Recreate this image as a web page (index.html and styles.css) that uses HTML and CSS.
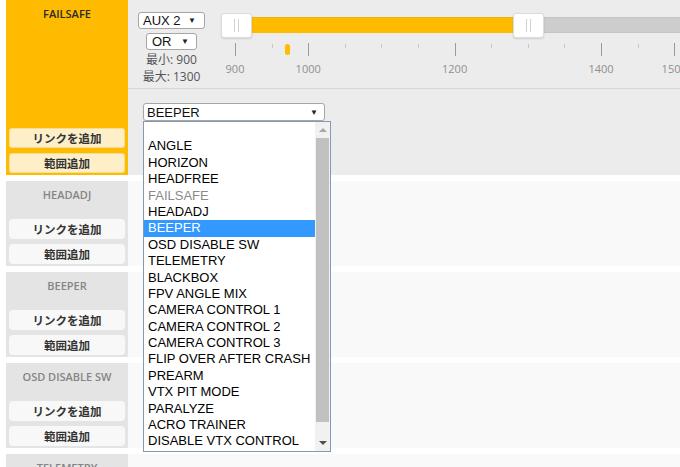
FILE: index.html
```html
<!DOCTYPE html>
<html lang="ja">
<head>
<meta charset="utf-8">
<title>Modes</title>
<link rel="stylesheet" href="styles.css">
</head>
<body>
<div class="modes">
  <div class="mode active first">
    <div class="mode-head">
      <div class="mode-name">FAILSAFE</div>
      <div class="mode-btns">
        <div class="btn">リンクを追加</div>
        <div class="btn">範囲追加</div>
      </div>
    </div>
    <div class="ranges">
      <div class="range range-aux">
        <div class="channel">
          <div class="sel sel-aux"><span>AUX 2</span><span class="arr">▼</span></div>
          <div class="sel sel-or"><span>OR</span><span class="arr">▼</span></div>
          <div class="minmax first-mm">最小: 900</div>
          <div class="minmax">最大: 1300</div>
        </div>
        <div class="slider">
          <div class="track">
            <div class="fill" style="left:0px;width:292.8px"></div>
            <div class="handle" style="left:0px"><i></i><i></i></div>
            <div class="handle" style="left:292.8px"><i></i><i></i></div>
          </div>
          <div class="pips">
            <div class="tick major" style="left:0px"></div>
            <div class="label" style="left:0px">900</div>
            <div class="tick minor" style="left:36.6px"></div>
            <div class="tick major" style="left:73.2px"></div>
            <div class="label" style="left:73.2px">1000</div>
            <div class="tick minor" style="left:109.8px"></div>
            <div class="tick minor" style="left:146.4px"></div>
            <div class="tick minor" style="left:183px"></div>
            <div class="tick major" style="left:219.6px"></div>
            <div class="label" style="left:219.6px">1200</div>
            <div class="tick minor" style="left:256.2px"></div>
            <div class="tick minor" style="left:292.8px"></div>
            <div class="tick minor" style="left:329.4px"></div>
            <div class="tick major" style="left:366px"></div>
            <div class="label" style="left:366px">1400</div>
            <div class="tick minor" style="left:402.6px"></div>
            <div class="tick major" style="left:439.2px"></div>
            <div class="label" style="left:439.2px">1500</div>
            <div class="marker" style="left:50px"></div>
          </div>
        </div>
      </div>
      <div class="range range-link">
        <div class="link-wrap">
          <div class="sel sel-mode"><span>BEEPER</span><span class="arr">▼</span></div>
          <div class="dropdown">
            <div class="options">
              <div class="opt">&nbsp;</div>
              <div class="opt">ANGLE</div>
              <div class="opt">HORIZON</div>
              <div class="opt">HEADFREE</div>
              <div class="opt disabled">FAILSAFE</div>
              <div class="opt">HEADADJ</div>
              <div class="opt selected">BEEPER</div>
              <div class="opt">OSD DISABLE SW</div>
              <div class="opt">TELEMETRY</div>
              <div class="opt">BLACKBOX</div>
              <div class="opt">FPV ANGLE MIX</div>
              <div class="opt">CAMERA CONTROL 1</div>
              <div class="opt">CAMERA CONTROL 2</div>
              <div class="opt">CAMERA CONTROL 3</div>
              <div class="opt">FLIP OVER AFTER CRASH</div>
              <div class="opt">PREARM</div>
              <div class="opt">VTX PIT MODE</div>
              <div class="opt">PARALYZE</div>
              <div class="opt">ACRO TRAINER</div>
              <div class="opt">DISABLE VTX CONTROL</div>
            </div>
            <div class="scrollbar">
              <div class="sb-btn"><span class="tri-up"></span></div>
              <div class="sb-track"><div class="sb-thumb"></div></div>
              <div class="sb-btn"><span class="tri-down"></span></div>
            </div>
          </div>
        </div>
      </div>
    </div>
  </div>

  <div class="mode">
    <div class="mode-head">
      <div class="mode-name">HEADADJ</div>
      <div class="mode-btns">
        <div class="btn">リンクを追加</div>
        <div class="btn">範囲追加</div>
      </div>
    </div>
    <div class="ranges"></div>
  </div>

  <div class="mode">
    <div class="mode-head">
      <div class="mode-name">BEEPER</div>
      <div class="mode-btns">
        <div class="btn">リンクを追加</div>
        <div class="btn">範囲追加</div>
      </div>
    </div>
    <div class="ranges"></div>
  </div>

  <div class="mode">
    <div class="mode-head">
      <div class="mode-name">OSD DISABLE SW</div>
      <div class="mode-btns">
        <div class="btn">リンクを追加</div>
        <div class="btn">範囲追加</div>
      </div>
    </div>
    <div class="ranges"></div>
  </div>

  <div class="mode">
    <div class="mode-head">
      <div class="mode-name">TELEMETRY</div>
      <div class="mode-btns">
        <div class="btn">リンクを追加</div>
        <div class="btn">範囲追加</div>
      </div>
    </div>
    <div class="ranges"></div>
  </div>
</div>
</body>
</html>
```

FILE: styles.css
```css
html, body {
  margin: 0;
  padding: 0;
  background: #ffffff;
  width: 680px;
  height: 467px;
  overflow: hidden;
}

.modes {
  display: flex;
  flex-direction: column;
  gap: 6px;
  padding-left: 6px;
}

.mode {
  display: flex;
  height: 85px;
  flex-shrink: 0;
}

.mode.first {
  height: 175px;
}

.mode-head {
  width: 122px;
  flex-shrink: 0;
  box-sizing: border-box;
  background: #e4e4e4;
  padding: 0 3px 2px;
  display: flex;
  flex-direction: column;
  justify-content: space-between;
}

.active .mode-head {
  background: #ffbb00;
}

.mode-name {
  padding-top: 7px;
  font: 600 11px/13px "Open Sans", "Noto Sans", sans-serif;
  color: #858585;
  text-align: center;
}

.active .mode-name {
  color: #2a2a2a;
}

.mode-btns {
  display: flex;
  flex-direction: column;
  gap: 5px;
}

.btn {
  height: 20px;
  border-radius: 4px;
  background: #f8f8f8;
  font: 700 11.5px/20px "Noto Sans CJK JP", sans-serif;
  color: #333333;
  text-align: center;
}

.active .btn {
  background: #feefc8;
  box-shadow: inset 0 0 0 1px #f6dd96;
}

.ranges {
  flex: 1;
  min-width: 0;
  background: #f9f9f9;
  display: flex;
  flex-direction: column;
}

.active .ranges {
  background: #ececec;
}

.range-aux {
  height: 88px;
  border-bottom: 1px solid #d6d6d6;
  display: flex;
  padding-left: 10px;
  box-sizing: content-box;
  overflow: hidden;
}

.channel {
  width: 67px;
  flex-shrink: 0;
  padding-top: 12px;
  display: flex;
  flex-direction: column;
  align-items: center;
  gap: 4px;
}

.sel {
  box-sizing: border-box;
  background: #ffffff;
  border: 1px solid #a6a6a6;
  border-radius: 3px;
  display: flex;
  justify-content: space-between;
  align-items: center;
  font: 13px "Liberation Sans", Arial, sans-serif;
  color: #111111;
}

.arr {
  font-size: 8px;
  color: #222222;
}

.sel-aux {
  width: 67px;
  height: 17px;
  padding: 0 8px 0 4px;
}

.sel-or {
  width: 51px;
  height: 17px;
  padding: 0 7px 0 5px;
}

.minmax {
  font: 12px/17px "Open Sans", "Noto Sans CJK JP", sans-serif;
  color: #555555;
  white-space: nowrap;
  margin-top: -4px;
}

.minmax.first-mm {
  margin-top: -3px;
}

.slider {
  margin-left: 30px;
  padding-top: 17px;
  width: 900px;
  flex-shrink: 0;
}

.track {
  position: relative;
  height: 16px;
  box-sizing: border-box;
  background: #cdcdcd;
  border: 1px solid #c4c4c4;
  border-radius: 2px;
}

.fill {
  position: absolute;
  top: -1px;
  bottom: -1px;
  background: #ffbb00;
  border-top: 1px solid #f2b000;
}

.handle {
  position: absolute;
  top: -5px;
  width: 31px;
  height: 25px;
  margin-left: -15.5px;
  box-sizing: border-box;
  background: #ffffff;
  border: 1px solid #dcdcdc;
  border-radius: 3px;
  box-shadow: 0 1px 2px rgba(0, 0, 0, 0.12);
  display: flex;
  justify-content: center;
  align-items: center;
  gap: 3px;
}

.handle i {
  display: block;
  width: 1px;
  height: 13px;
  background: #d2d2d2;
}

.pips {
  position: relative;
  height: 40px;
  margin-top: 10px;
}

.tick {
  position: absolute;
  top: 0;
  width: 1px;
  background: #9a9a9a;
}

.tick.major {
  height: 13px;
}

.tick.minor {
  top: 1px;
  height: 4px;
  background: #c6c6c6;
}

.label {
  position: absolute;
  top: 19px;
  transform: translateX(-50%);
  font: 11px/14px "Open Sans", sans-serif;
  color: #8f8f8f;
}

.marker {
  position: absolute;
  top: 1px;
  width: 5px;
  height: 11px;
  border-radius: 3px;
  background: #ffbb00;
}

.range-link {
  flex: 1;
}

.link-wrap {
  position: relative;
  padding: 14px 0 0 15px;
}

.sel-mode {
  width: 182px;
  height: 18px;
  padding: 0 6px 0 3px;
}

.dropdown {
  position: absolute;
  top: 32px;
  left: 15px;
  width: 188px;
  height: 331px;
  box-sizing: border-box;
  background: #ffffff;
  border: 1px solid #8399b6;
  display: flex;
  z-index: 10;
}

.options {
  flex: 1;
}

.opt {
  height: 16.4px;
  padding-left: 4px;
  font: 13px/16.4px "Liberation Sans", Arial, sans-serif;
  color: #000000;
  white-space: nowrap;
}

.opt.disabled {
  color: #8a8a8a;
}

.opt.selected {
  background: #3399ff;
  color: #ffffff;
}

.scrollbar {
  width: 15px;
  flex-shrink: 0;
  background: #f1f1f1;
  display: flex;
  flex-direction: column;
}

.sb-btn {
  height: 16px;
  display: flex;
  justify-content: center;
  align-items: center;
}

.sb-track {
  flex: 1;
  padding: 0 1px;
}

.sb-thumb {
  height: 284px;
  background: #c1c1c1;
}

.tri-up {
  width: 0;
  height: 0;
  border-left: 4px solid transparent;
  border-right: 4px solid transparent;
  border-bottom: 4px solid #a8a8a8;
}

.tri-down {
  width: 0;
  height: 0;
  border-left: 4px solid transparent;
  border-right: 4px solid transparent;
  border-top: 4px solid #505050;
}
```
